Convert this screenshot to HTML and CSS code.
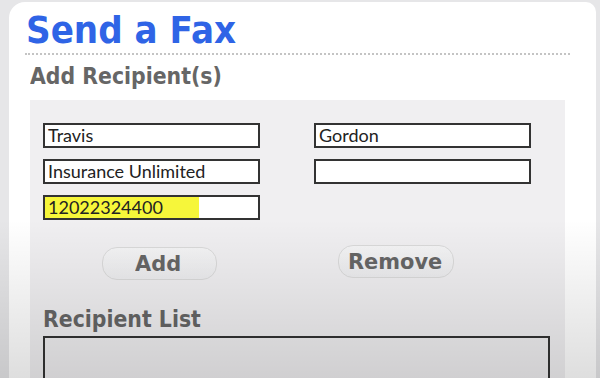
FILE: index.html
```html
<!DOCTYPE html>
<html>
<head>
<meta charset="utf-8">
<link rel="stylesheet" href="styles.css">
</head>
<body>
<div class="frame">
  <div class="card">
    <h1 class="title"><span class="squeeze">Send a Fax</span></h1>
    <div class="divider"></div>
    <h2 class="heading"><span class="squeeze">Add Recipient(s)</span></h2>
    <div class="panel">
      <div class="fields">
        <div class="field">Travis</div>
        <div class="field">Gordon</div>
        <div class="field">Insurance Unlimited</div>
        <div class="field"></div>
        <div class="field"><span class="hl">12022324400</span></div>
      </div>
      <div class="buttons">
        <div class="btn btn-add"><span class="squeeze">Add</span></div>
        <div class="btn btn-remove"><span class="squeeze">Remove</span></div>
      </div>
      <h2 class="heading list-heading"><span class="squeeze">Recipient List</span></h2>
      <div class="list"></div>
    </div>
  </div>
</div>
</body>
</html>
```

FILE: styles.css
```css
* { box-sizing: border-box; }
html, body {
  margin: 0;
  padding: 0;
  width: 600px;
  height: 378px;
  overflow: hidden;
  background: #e6e6e8;
}
.frame {
  position: relative;
  width: 600px;
  height: 378px;
  padding: 2px 4px 0 9px;
}
.frame::after {
  content: "";
  position: absolute;
  left: 0; top: 0; right: 0; bottom: 0;
  background: linear-gradient(to bottom, rgba(0,0,0,0) 0, rgba(0,0,0,0) 58%, rgba(0,0,0,0.13) 100%);
  pointer-events: none;
}
.card {
  background: #ffffff;
  height: 376px;
  border-radius: 16px 10px 0 0;
  padding-top: 8px;
  overflow: hidden;
}
.squeeze {
  display: inline-block;
  transform: scaleX(0.89);
  transform-origin: left center;
  white-space: nowrap;
}
.title {
  margin: 0 0 0 17px;
  font-family: "DejaVu Sans", sans-serif;
  font-weight: bold;
  font-size: 38px;
  line-height: 40px;
  color: #2f64e6;
}
.title .squeeze { transform: scaleX(0.9); }
.divider {
  margin: 3px 26px 0 16px;
  border-top: 2px dotted #c4c4c4;
  height: 0;
}
.heading {
  margin: 8px 0 0 21px;
  font-family: "DejaVu Sans", sans-serif;
  font-weight: bold;
  font-size: 23px;
  line-height: 26px;
  color: #666666;
}
.panel {
  margin: 11px 0 0 21px;
  width: 535px;
  height: 300px;
  background: #f0eff1;
  padding: 23px 0 0 13px;
}
.fields {
  display: grid;
  grid-template-columns: 217px 217px;
  column-gap: 54px;
  grid-template-rows: 25px 25px 25px;
  row-gap: 11px;
}
.field {
  height: 25px;
  border: 2px solid #333333;
  background: #ffffff;
  font-family: Lato, sans-serif;
  font-size: 18px;
  line-height: 21px;
  color: #222222;
  padding-left: 3px;
  overflow: hidden;
  white-space: nowrap;
}
.hl {
  display: inline-block;
  width: 154px;
  height: 21px;
  margin-left: -3px;
  padding-left: 3px;
  background: #f6f63a;
}
.buttons {
  display: grid;
  grid-template-columns: 217px 217px;
  column-gap: 54px;
  margin-top: 25px;
  align-items: start;
}
.btn {
  height: 33px;
  border: 1px solid #dadada;
  border-radius: 15px;
  background: linear-gradient(to bottom, #f4f4f5, #ececee);
  font-family: "DejaVu Sans", sans-serif;
  font-weight: bold;
  font-size: 22px;
  line-height: 31px;
  color: #666666;
}
.btn .squeeze { transform: scaleX(0.95); }
.btn-add {
  width: 115px;
  margin: 2px 0 0 59px;
  padding-left: 32px;
}
.btn-remove {
  width: 116px;
  margin: 0 0 0 24px;
  padding-left: 9px;
}
.list-heading {
  margin: 26px 0 0 0;
}
.list {
  margin-top: 4px;
  width: 507px;
  height: 80px;
  border: 2px solid #333333;
  border-bottom: none;
  background: #efeef0;
}
```
